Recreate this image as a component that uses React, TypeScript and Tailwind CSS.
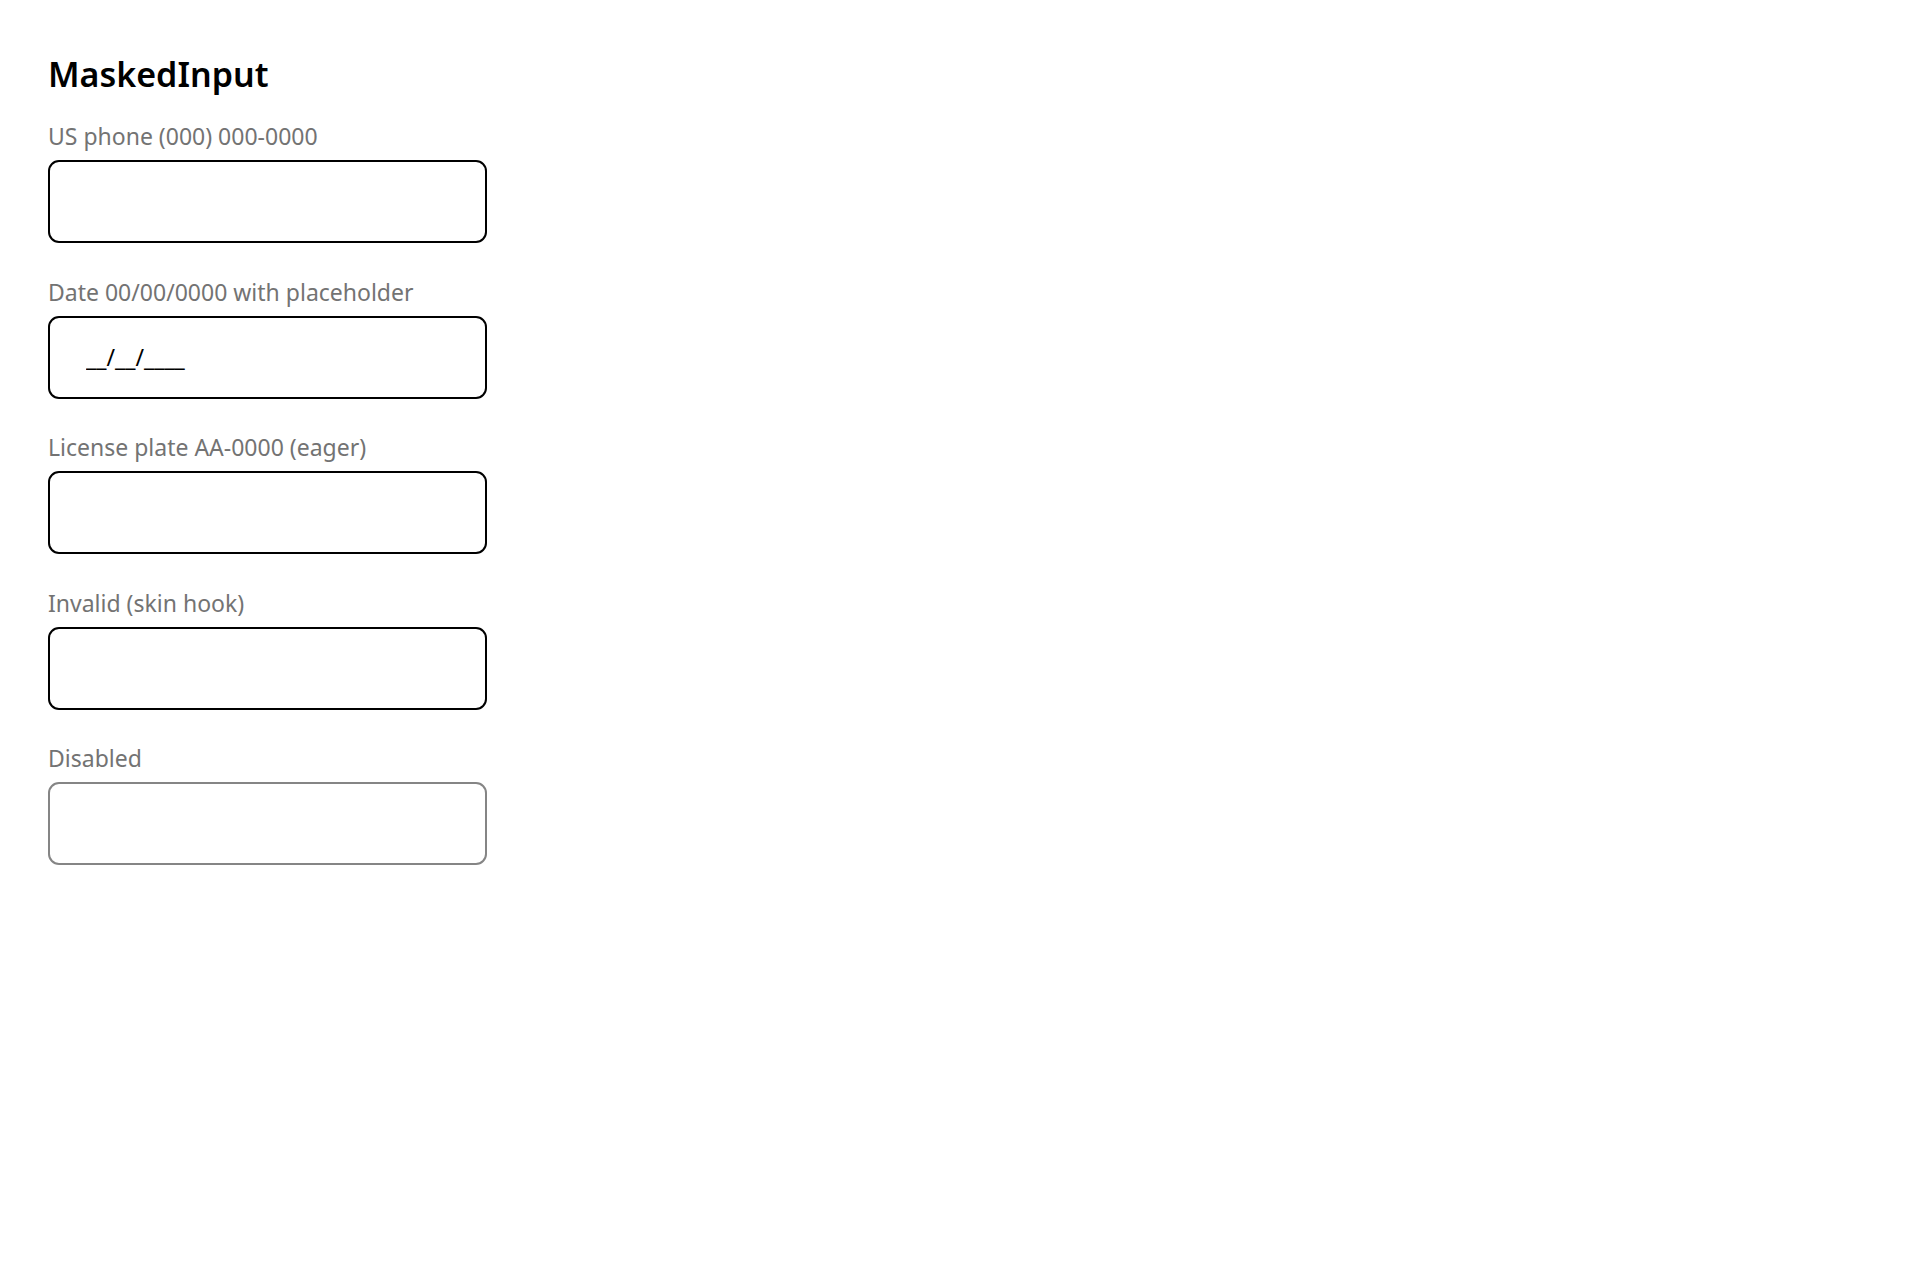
import { useState } from 'react';

type FieldProps = {
  label: string;
  placeholder?: string;
  disabled?: boolean;
  invalid?: boolean;
};

const Field = ({ label, placeholder, disabled, invalid }: FieldProps) => {
  const [value, setValue] = useState('');

  return (
    <label className="flex flex-col">
      <span className="text-[23px] leading-[32px] text-[#737373]">{label}</span>
      <input
        type="text"
        value={value}
        placeholder={placeholder}
        disabled={disabled}
        aria-invalid={invalid}
        onChange={(e) => setValue(e.target.value)}
        className={
          'mt-[8px] h-[83px] w-[439px] rounded-[11px] border-2 bg-white pl-[36px] pr-4 text-[23px] text-black outline-none placeholder:text-black ' +
          (disabled ? 'border-[#858585]' : 'border-black')
        }
      />
    </label>
  );
};

const App = () => {
  return (
    <div
      className="min-h-screen bg-white px-[48px] pt-[52px]"
      style={{ fontFamily: '"Noto Sans", "Open Sans", sans-serif' }}
    >
      <h1 className="text-[34px] font-semibold leading-[44px] text-black">MaskedInput</h1>

      <div className="mt-[24px] flex flex-col gap-[32.5px]">
        <Field label="US phone (000) 000-0000" />
        <Field label="Date 00/00/0000 with placeholder" placeholder="__/__/____" />
        <Field label="License plate AA-0000 (eager)" />
        <Field label="Invalid (skin hook)" invalid />
        <Field label="Disabled" disabled />
      </div>
    </div>
  );
};

export default App;
